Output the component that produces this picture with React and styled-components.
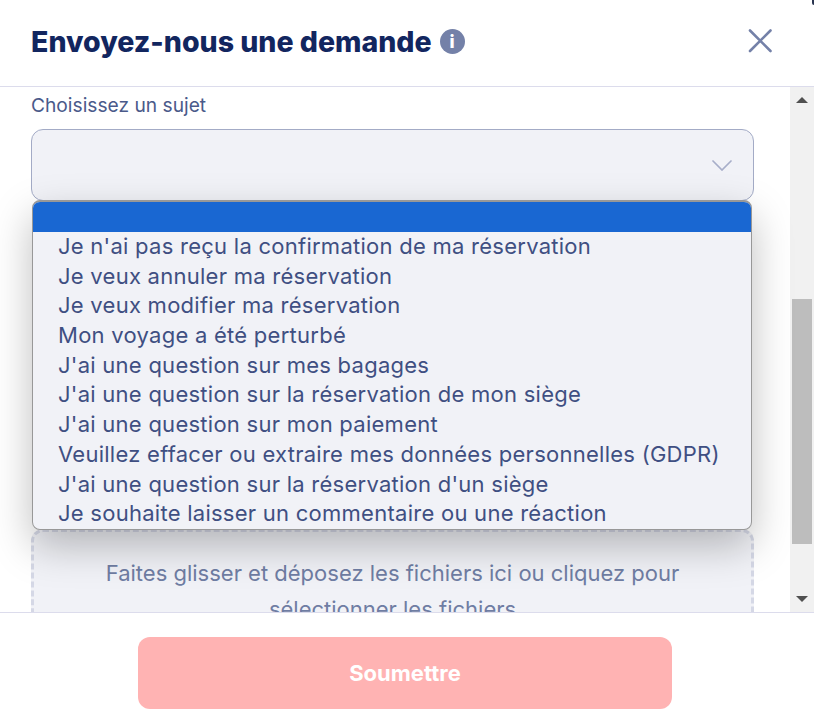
import React from "react";
import styled, { createGlobalStyle } from "styled-components";

const GlobalStyle = createGlobalStyle`
  html, body {
    margin: 0;
    height: 100%;
    background: #fff;
    overflow: hidden;
  }
  * {
    box-sizing: border-box;
  }
`;

const Modal = styled.div`
  position: relative;
  width: 814px;
  height: 721px;
  display: flex;
  flex-direction: column;
  background: #fff;
  font-family: "Inter", "Liberation Sans", sans-serif;
`;

const CornerMark = styled.span`
  position: absolute;
  top: 0;
  right: 0;
  width: 2px;
  height: 5px;
  background: #2a3550;
  border-bottom-left-radius: 2px;
`;

const Header = styled.header`
  height: 87px;
  flex: none;
  display: flex;
  align-items: center;
  justify-content: space-between;
  padding: 0 42px 4px 31px;
  border-bottom: 1px solid #dcdcec;
`;

const TitleRow = styled.div`
  display: flex;
  align-items: center;
  gap: 8px;
`;

const Title = styled.h1`
  margin: 0;
  font-size: 28.5px;
  font-weight: 800;
  color: #12265f;
`;

const InfoBadge = styled.span`
  width: 25px;
  height: 25px;
  border-radius: 50%;
  background: #7481a8;
  color: #fff;
  font-size: 18px;
  font-weight: 800;
  display: flex;
  align-items: center;
  justify-content: center;
`;

const CloseButton = styled.button`
  border: none;
  background: none;
  padding: 0;
  display: flex;
  color: #7481a8;
`;

const Body = styled.div`
  flex: 1;
  min-height: 0;
  display: flex;
`;

const Scroller = styled.div`
  flex: 1;
  overflow: hidden;
  padding: 6px 36px 0 31px;
`;

const Label = styled.div`
  font-size: 19.2px;
  line-height: 24px;
  color: #4a5a8a;
  margin-bottom: 12px;
`;

const SelectBox = styled.div`
  height: 72px;
  border: 1px solid #a3abc6;
  border-radius: 12px;
  background: #f1f2f7;
  display: flex;
  align-items: center;
  justify-content: flex-end;
  padding-right: 21px;
  color: #a7aec9;
`;

const Dropdown = styled.ul`
  position: absolute;
  z-index: 2;
  left: 32px;
  top: 200px;
  width: 720px;
  height: 330px;
  margin: 0;
  padding: 0;
  list-style: none;
  overflow: hidden;
  background: #f1f2f7;
  border: 1px solid #989898;
  border-top-width: 2px;
  border-radius: 8px;
  box-shadow: 0 16px 40px rgba(0, 0, 0, 0.26);
`;

const Option = styled.li`
  height: ${(p) => (p.$selected ? "30px" : "29.7px")};
  line-height: 29.7px;
  padding-left: 25px;
  font-size: 22px;
  letter-spacing: 0.26px;
  color: #3f4f82;
  white-space: nowrap;
  background: ${(p) => (p.$selected ? "#1967d2" : "transparent")};
`;

const DropZone = styled.div`
  height: 140px;
  margin-top: 328px;
  border: 3px dashed #d5d8e6;
  border-radius: 12px;
  background: #f1f2f7;
  padding: 23px 50px 0;
  text-align: center;
  font-size: 22px;
  line-height: 36px;
  color: #6f7da3;
`;

const Scrollbar = styled.div`
  width: 24px;
  flex: none;
  background: #f1f1f1;
  display: flex;
  flex-direction: column;
  align-items: center;
  justify-content: space-between;
  padding: 10px 0 10px;
`;

const Arrow = styled.span`
  width: 0;
  height: 0;
  border-left: 6px solid transparent;
  border-right: 6px solid transparent;
  ${(p) => (p.$down ? "border-top: 6px solid #505050;" : "border-bottom: 6px solid #505050;")}
`;

const Thumb = styled.div`
  width: 20px;
  height: 245px;
  margin-top: 190px;
  margin-bottom: 46px;
  background: #bdbdbd;
`;

const Footer = styled.footer`
  height: 109px;
  flex: none;
  border-top: 1px solid #dcdcec;
  display: flex;
  justify-content: center;
  padding: 24px 4px 0 0;
`;

const SubmitButton = styled.button`
  width: 534px;
  height: 72px;
  border: none;
  border-radius: 12px;
  background: #ffb3b3;
  color: #fff;
  font-family: inherit;
  font-size: 22px;
  font-weight: 700;
`;

const options = [
  "",
  "Je n'ai pas reçu la confirmation de ma réservation",
  "Je veux annuler ma réservation",
  "Je veux modifier ma réservation",
  "Mon voyage a été perturbé",
  "J'ai une question sur mes bagages",
  "J'ai une question sur la réservation de mon siège",
  "J'ai une question sur mon paiement",
  "Veuillez effacer ou extraire mes données personnelles (GDPR)",
  "J'ai une question sur la réservation d'un siège",
  "Je souhaite laisser un commentaire ou une réaction",
];

function CloseIcon() {
  return (
    <svg width="24" height="24" viewBox="0 0 24 24" fill="none" stroke="currentColor" strokeWidth="2.6" strokeLinecap="round">
      <path d="M2 1.5 22.5 22M22.5 1.5 2 22" />
    </svg>
  );
}

function ChevronIcon() {
  return (
    <svg width="20" height="11" viewBox="0 0 20 11" fill="none" stroke="currentColor" strokeWidth="1.7" strokeLinecap="round">
      <path d="M1 1 10 10 19 1" />
    </svg>
  );
}

function App() {
  return (
    <Modal>
      <GlobalStyle />
      <CornerMark />
      <Header>
        <TitleRow>
          <Title>Envoyez-nous une demande</Title>
          <InfoBadge>i</InfoBadge>
        </TitleRow>
        <CloseButton type="button" aria-label="Fermer">
          <CloseIcon />
        </CloseButton>
      </Header>
      <Body>
        <Scroller>
          <Label>Choisissez un sujet</Label>
          <SelectBox>
            <ChevronIcon />
          </SelectBox>
          <DropZone>
            Faites glisser et déposez les fichiers ici ou cliquez pour
            sélectionner les fichiers
          </DropZone>
        </Scroller>
        <Scrollbar>
          <Arrow />
          <Thumb />
          <Arrow $down />
        </Scrollbar>
      </Body>
      <Footer>
        <SubmitButton type="button">Soumettre</SubmitButton>
      </Footer>
      <Dropdown>
        {options.map((text, i) => (
          <Option key={i} $selected={i === 0}>
            {text}
          </Option>
        ))}
      </Dropdown>
    </Modal>
  );
}

export default App;
